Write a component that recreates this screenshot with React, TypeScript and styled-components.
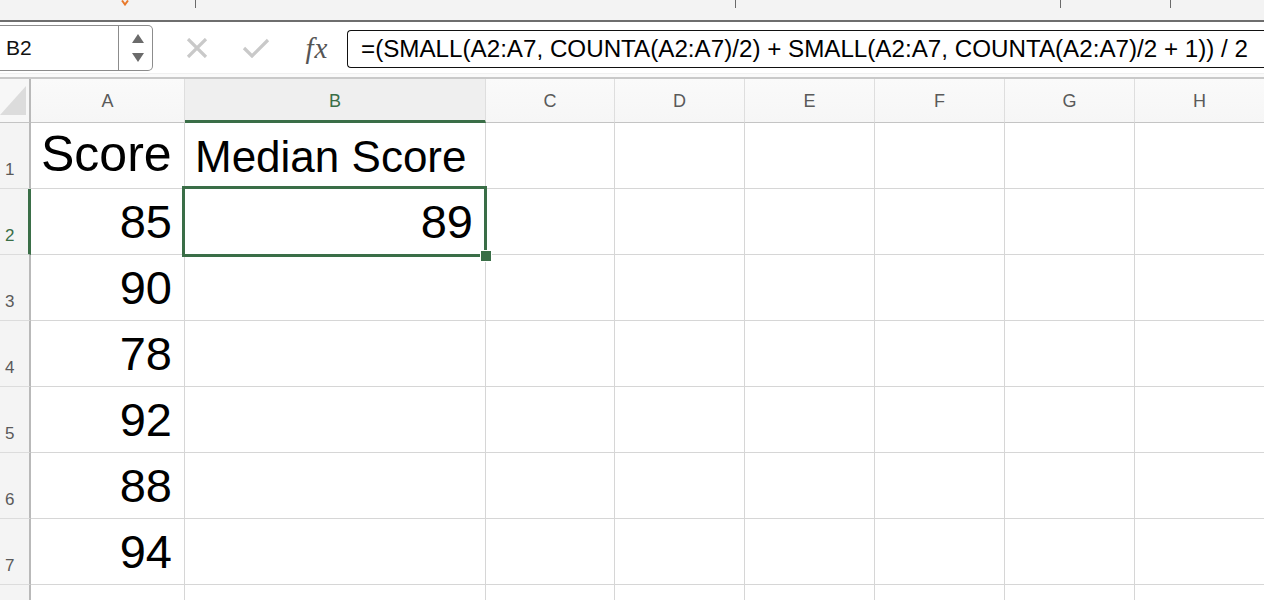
import React from "react";
import styled, { createGlobalStyle } from "styled-components";

const Global = createGlobalStyle`
  html, body { margin: 0; padding: 0; background: #fff; overflow: hidden; }
  body { font-family: "Liberation Sans", Arial, sans-serif; }
`;

const Page = styled.div`
  width: 1264px;
  height: 600px;
  overflow: hidden;
  display: flex;
  flex-direction: column;
`;

const TopStrip = styled.div`
  height: 20px;
  background: #f3f3f3;
  border-bottom: 2px solid #6e6e6e;
  display: flex;
  align-items: flex-start;
  flex-shrink: 0;
`;

const Tick = styled.div<{ $left: number }>`
  margin-left: ${(p) => p.$left}px;
  width: 1px;
  height: 8px;
  background: #6a6a6a;
`;

const OrangeMark = styled.div<{ $left: number }>`
  margin-left: ${(p) => p.$left}px;
  width: 8px;
  height: 6px;
  display: flex;
`;

const FormulaBar = styled.div`
  height: 52px;
  background: #fff;
  display: flex;
  align-items: flex-start;
  padding-top: 3px;
  box-sizing: border-box;
  border-bottom: 1px solid #f0f0f0;
  flex-shrink: 0;
`;

const Separator = styled.div`
  height: 3px;
  background: #fafafa;
  border-bottom: 2px solid #c9c9c9;
  flex-shrink: 0;
`;

const NameBox = styled.div`
  width: 153px;
  height: 46px;
  box-sizing: border-box;
  border: 1px solid #8c8c8c;
  border-left: none;
  border-radius: 0 5px 5px 0;
  display: flex;
  align-items: stretch;
`;

const NameText = styled.div`
  flex: 1;
  display: flex;
  align-items: center;
  padding-left: 6px;
  font-size: 21px;
  color: #111;
  border-right: 1px solid #8c8c8c;
`;

const Spinner = styled.div`
  width: 29px;
  display: flex;
  flex-direction: column;
  align-items: center;
  justify-content: center;
  gap: 10px;
  padding-left: 4px;
`;

const Tri = styled.div<{ $up?: boolean }>`
  width: 0;
  height: 0;
  border-left: 6px solid transparent;
  border-right: 6px solid transparent;
  ${(p) => (p.$up ? "border-bottom: 9px solid #6b6b6b;" : "border-top: 9px solid #6b6b6b;")}
`;

const IconSlot = styled.div<{ $w: number; $ml: number }>`
  width: ${(p) => p.$w}px;
  margin-left: ${(p) => p.$ml}px;
  height: 46px;
  display: flex;
  align-items: center;
  justify-content: center;
`;

const Fx = styled.span`
  font-family: "Liberation Serif", "Times New Roman", serif;
  font-style: italic;
  font-size: 29px;
  color: #555;
  letter-spacing: 1px;
`;

const FormulaInput = styled.div`
  margin-left: 15px;
  margin-top: 5px;
  flex: 1;
  height: 38px;
  box-sizing: border-box;
  border: 1px solid #111;
  border-right: none;
  border-radius: 4px 0 0 4px;
  display: flex;
  align-items: center;
  padding-left: 13px;
  white-space: nowrap;
  overflow: hidden;
`;

const FormulaText = styled.span`
  font-family: "Liberation Sans", Arial, sans-serif;
  font-size: 24.2px;
  color: #000;
`;

const Grid = styled.div`
  display: grid;
  grid-template-columns: 31px 154px 301px 129px repeat(5, 130px);
  grid-auto-rows: 66px;
  grid-template-rows: 44px 66px;
`;

const Corner = styled.div`
  background: #f7f7f7;
  border-right: 2px solid #b9b9b9;
  border-bottom: 1px solid #c4c4c4;
  box-sizing: border-box;
  display: flex;
  align-items: center;
`;

const CornerTri = styled.div`
  width: 0;
  height: 0;
  border-left: 26px solid transparent;
  border-bottom: 29px solid #dcdcdc;
`;

const ColHead = styled.div<{ $active?: boolean }>`
  background: ${(p) => (p.$active ? "#efefef" : "linear-gradient(#fafafa, #f6f6f6)")};
  border-right: 1px solid #dedede;
  border-bottom: ${(p) => (p.$active ? "3px solid #3a6e47" : "1px solid #c4c4c4")};
  box-sizing: border-box;
  display: flex;
  align-items: center;
  justify-content: center;
  padding-top: ${(p) => (p.$active ? "3px" : "1px")};
  font-size: 18px;
  color: ${(p) => (p.$active ? "#3a6e47" : "#5a5a5a")};
`;

const RowHead = styled.div<{ $active?: boolean }>`
  background: #f4f4f4;
  border-right: ${(p) => (p.$active ? "3px solid #3a6e47" : "2px solid #b9b9b9")};
  border-bottom: 1px solid #dcdcdc;
  box-sizing: border-box;
  display: flex;
  align-items: flex-end;
  padding-left: 5px;
  padding-bottom: 8px;
  font-size: 17px;
  line-height: 1.15;
  color: ${(p) => (p.$active ? "#3a6e47" : "#5a5a5a")};
`;

const Cell = styled.div<{ $align?: "left" | "right"; $size?: number }>`
  position: relative;
  border-right: 1px solid #d6d6d6;
  border-bottom: 1px solid #d6d6d6;
  box-sizing: border-box;
  display: flex;
  align-items: flex-end;
  justify-content: ${(p) => (p.$align === "right" ? "flex-end" : "flex-start")};
  padding: 0 12px 5px 10px;
  font-size: ${(p) => p.$size ?? 47}px;
  line-height: 1.15;
  color: #000;
  white-space: nowrap;
`;

const Selection = styled.div`
  position: absolute;
  z-index: 3;
  left: -3px;
  top: -3px;
  right: -2px;
  bottom: -3px;
  border: 3px solid #3a6e47;
  pointer-events: none;
`;

const FillHandle = styled.div`
  position: absolute;
  right: -8px;
  bottom: -8px;
  width: 12px;
  height: 12px;
  background: #3a6e47;
  border: 1px solid #fff;
  box-sizing: border-box;
`;

const cols = ["A", "B", "C", "D", "E", "F", "G", "H"];
const scores = ["85", "90", "78", "92", "88", "94"];

export default function App() {
  const rows: React.ReactNode[] = [];
  for (let r = 1; r <= 8; r++) {
    rows.push(
      <RowHead key={`rh${r}`} $active={r === 2}>
        {r <= 7 ? r : ""}
      </RowHead>
    );
    cols.forEach((c) => {
      let content: React.ReactNode = null;
      let align: "left" | "right" = "left";
      let size = 47;
      if (r === 1 && c === "A") {
        content = "Score";
        size = 50;
      } else if (r === 1 && c === "B") {
        content = "Median Score";
        size = 44;
      } else if (r >= 2 && r <= 7 && c === "A") {
        content = scores[r - 2];
        align = "right";
      } else if (r === 2 && c === "B") {
        content = "89";
        align = "right";
      }
      rows.push(
        <Cell key={`${c}${r}`} $align={align} $size={size}>
          {content}
          {r === 2 && c === "B" && (
            <Selection>
              <FillHandle />
            </Selection>
          )}
        </Cell>
      );
    });
  }

  return (
    <Page>
      <Global />
      <TopStrip>
        <OrangeMark $left={121}>
          <svg width="8" height="6" viewBox="0 0 8 6">
            <path d="M1 0.5 L4 4.5 L7 0.5" stroke="#e8792b" strokeWidth="2" fill="none" />
          </svg>
        </OrangeMark>
        <Tick $left={66} />
        <Tick $left={539} />
        <Tick $left={324} />
        <Tick $left={109} />
      </TopStrip>
      <FormulaBar>
        <NameBox>
          <NameText>B2</NameText>
          <Spinner>
            <Tri $up />
            <Tri />
          </Spinner>
        </NameBox>
        <IconSlot $w={26} $ml={31}>
          <svg width="22" height="20" viewBox="0 0 22 20">
            <path d="M2 1 L20 19 M20 1 L2 19" stroke="#c9c9c9" strokeWidth="3.2" fill="none" />
          </svg>
        </IconSlot>
        <IconSlot $w={30} $ml={31}>
          <svg width="28" height="20" viewBox="0 0 28 20">
            <path d="M2 10 L10 18 L26 2" stroke="#c9c9c9" strokeWidth="3.2" fill="none" />
          </svg>
        </IconSlot>
        <IconSlot $w={30} $ml={31}>
          <Fx>fx</Fx>
        </IconSlot>
        <FormulaInput>
          <FormulaText>=(SMALL(A2:A7, COUNTA(A2:A7)/2) + SMALL(A2:A7, COUNTA(A2:A7)/2 + 1)) / 2</FormulaText>
        </FormulaInput>
      </FormulaBar>
      <Separator />
      <Grid>
        <Corner>
          <CornerTri />
        </Corner>
        {cols.map((c) => (
          <ColHead key={c} $active={c === "B"}>
            {c}
          </ColHead>
        ))}
        {rows}
      </Grid>
    </Page>
  );
}
